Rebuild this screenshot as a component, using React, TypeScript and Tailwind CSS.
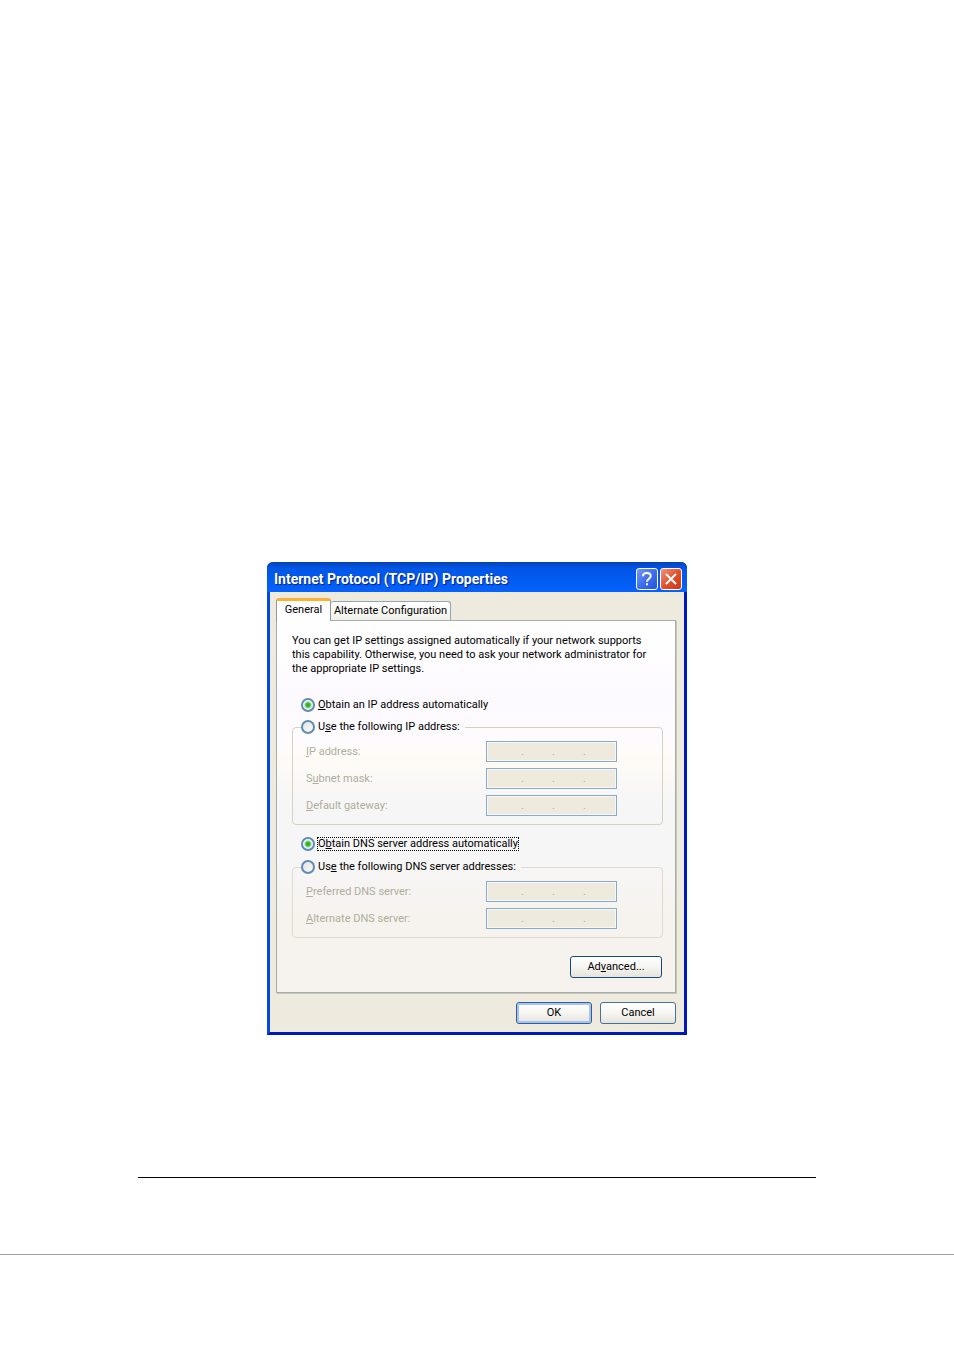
import { useState } from "react";
import type { ReactNode } from "react";

type Mode = "auto" | "manual";

function RadioOption({
  id,
  name,
  checked,
  onSelect,
  focused = false,
  children,
}: {
  id: string;
  name: string;
  checked: boolean;
  onSelect: () => void;
  focused?: boolean;
  children: ReactNode;
}) {
  return (
    <div className="flex h-4 items-center">
      <input
        type="radio"
        id={id}
        name={name}
        checked={checked}
        onChange={onSelect}
        className="h-[14px] w-[14px] shrink-0 appearance-none rounded-full border-2 border-[#5f8cb4] bg-linear-to-br from-[#dedfdb] to-white bg-origin-border checked:bg-[radial-gradient(circle,#22a822_0px,#3cbc3c_2px,#eef3ec_4px,#ffffff_5px)]"
      />
      <label
        htmlFor={id}
        className={
          focused
            ? "ml-0.5 border border-dotted border-black leading-3 whitespace-nowrap"
            : "ml-0.5 border border-transparent leading-3 whitespace-nowrap"
        }
      >
        {children}
      </label>
    </div>
  );
}

function AddressRow({
  id,
  label,
  disabled,
  children,
}: {
  id: string;
  label: string;
  disabled: boolean;
  children: ReactNode;
}) {
  return (
    <div className="flex h-[21px] items-center justify-between">
      <label htmlFor={id} className={disabled ? "text-[#b0ad9d]" : "text-black"}>
        {children}
      </label>
      <div
        className={
          disabled
            ? "flex h-[21px] w-[131px] items-center border border-[#88abcd] bg-[#eeeade] px-1.5 text-[#b0ad9d] inset-ring inset-ring-[#f8f7f2]"
            : "flex h-[21px] w-[131px] items-center border border-[#7f9db9] bg-white px-1.5 text-black"
        }
      >
        {[1, 2, 3, 4].map((part) => (
          <div key={part} className="flex">
            <input
              id={part === 1 ? id : undefined}
              type="text"
              maxLength={3}
              disabled={disabled}
              aria-label={`${label} part ${part}`}
              className="w-7 bg-transparent text-center outline-none"
            />
            {part < 4 && <span className="w-[3px]">.</span>}
          </div>
        ))}
      </div>
    </div>
  );
}

const buttonClass =
  "h-[22px] rounded-[3px] border bg-linear-to-b from-white via-[#f6f5f1] to-[#e6e3da]";

export default function App() {
  const [ipMode, setIpMode] = useState<Mode>("auto");
  const [dnsMode, setDnsMode] = useState<Mode>("auto");

  return (
    <main className="bg-white pt-[562px] pb-24 font-[Roboto,sans-serif] text-[11px] leading-[14px] text-black">
      <section
        aria-labelledby="dialog-title"
        className="mx-auto max-w-[420px] rounded-t-md border-x-[3px] border-b-[3px] border-r-[#0019bd] border-b-[#0019bd] border-l-[#0549e3] bg-[#eeeade]"
      >
        <header className="-mx-[3px] flex h-[30px] items-center rounded-t-md bg-linear-to-b from-[#0842b4] via-[#0055e5] via-20% to-[#0562fb] pt-1 pr-[5px] pl-[7px]">
          <h1
            id="dialog-title"
            className="flex-1 text-[14px] font-bold text-white text-shadow-[1px_1px_1px_#0a1f80]"
          >
            Internet Protocol (TCP/IP) Properties
          </h1>
          <div className="flex gap-0.5">
            <button
              type="button"
              aria-label="Help"
              className="flex h-[22px] w-[22px] items-center justify-center rounded-[3px] border border-white bg-linear-to-br from-[#7498f5] via-[#3f6fee] to-[#2353dc]"
            >
              <svg width="14" height="16" viewBox="0 0 14 16" fill="none" stroke="#fff" strokeWidth="2">
                <path d="M3 5.2C3 2.9 4.6 2 6.8 2c2.3 0 3.9 1 3.9 3.1 0 2.6-3.7 2.6-3.7 5.6M7 12.3v2" />
              </svg>
            </button>
            <button
              type="button"
              aria-label="Close"
              className="flex h-[22px] w-[22px] items-center justify-center rounded-[3px] border border-white bg-linear-to-br from-[#ee9479] via-[#e2512c] to-[#c93a10]"
            >
              <svg width="14" height="14" viewBox="0 0 14 14" stroke="#fff" strokeWidth="2">
                <path d="M2 2l10 10M12 2L2 12" />
              </svg>
            </button>
          </div>
        </header>

        <div className="pt-1.5 pr-2 pb-2 pl-1.5">
          <div role="tablist" className="flex items-end">
            <button
              type="button"
              role="tab"
              aria-selected="true"
              className="relative z-10 -mb-px h-[23px] w-[55px] rounded-t-[3px] border-x border-t-[3px] border-x-[#919b9c] border-t-[#fbb030] bg-white pb-0.5"
            >
              General
            </button>
            <button
              type="button"
              role="tab"
              aria-selected="false"
              className="h-[19px] w-[120px] rounded-t-[3px] border border-b-0 border-l-0 border-[#91a7b4] bg-linear-to-b from-white to-[#f0f0ea] whitespace-nowrap"
            >
              Alternate Configuration
            </button>
          </div>

          <div
            role="tabpanel"
            className="border border-[#a5acae] bg-[linear-gradient(#ffffff_0%,#fdfaff_20%,#fefbff_32%,#fefbf6_37%,#f6f6f7_50%,#f6f6f6_65%,#f6f3ee_80%)] px-[15px] pt-[13px] pb-[14px] shadow-[1px_1px_0_#c9c7ba]"
          >
            <p>
              You can get IP settings assigned automatically if your network supports
              <br />
              this capability. Otherwise, you need to ask your network administrator for
              <br />
              the appropriate IP settings.
            </p>

            <div className="mt-[21px] pl-[9px]">
              <RadioOption
                id="ip-auto"
                name="ip-mode"
                checked={ipMode === "auto"}
                onSelect={() => setIpMode("auto")}
              >
                <u>O</u>btain an IP address automatically
              </RadioOption>
            </div>
            <fieldset className="mr-[-3px] mt-1.5 rounded-[4px] border border-[#d5d3bf] pr-[45px] pb-2 pl-2">
              <legend className="pr-1">
                <RadioOption
                  id="ip-manual"
                  name="ip-mode"
                  checked={ipMode === "manual"}
                  onSelect={() => setIpMode("manual")}
                >
                  U<u>s</u>e the following IP address:
                </RadioOption>
              </legend>
              <div className="mt-1.5 space-y-1.5 pl-[5px]">
                <AddressRow id="ip-address" label="IP address" disabled={ipMode === "auto"}>
                  <u>I</u>P address:
                </AddressRow>
                <AddressRow id="subnet-mask" label="Subnet mask" disabled={ipMode === "auto"}>
                  S<u>u</u>bnet mask:
                </AddressRow>
                <AddressRow id="gateway" label="Default gateway" disabled={ipMode === "auto"}>
                  <u>D</u>efault gateway:
                </AddressRow>
              </div>
            </fieldset>

            <div className="mt-[11px] pl-[9px]">
              <RadioOption
                id="dns-auto"
                name="dns-mode"
                checked={dnsMode === "auto"}
                onSelect={() => setDnsMode("auto")}
                focused
              >
                O<u>b</u>tain DNS server address automatically
              </RadioOption>
            </div>
            <fieldset className="mr-[-3px] mt-[7px] rounded-[4px] border border-[#dddbcb] pr-[45px] pb-2 pl-2">
              <legend className="pr-1">
                <RadioOption
                  id="dns-manual"
                  name="dns-mode"
                  checked={dnsMode === "manual"}
                  onSelect={() => setDnsMode("manual")}
                >
                  Us<u>e</u> the following DNS server addresses:
                </RadioOption>
              </legend>
              <div className="mt-1.5 space-y-1.5 pl-[5px]">
                <AddressRow id="preferred-dns" label="Preferred DNS server" disabled={dnsMode === "auto"}>
                  <u>P</u>referred DNS server:
                </AddressRow>
                <AddressRow id="alternate-dns" label="Alternate DNS server" disabled={dnsMode === "auto"}>
                  <u>A</u>lternate DNS server:
                </AddressRow>
              </div>
            </fieldset>

            <div className="mt-[18px] -mr-0.5 flex justify-end">
              <button type="button" className={`${buttonClass} w-[92px] border-[#174a7c]`}>
                Ad<u>v</u>anced...
              </button>
            </div>
          </div>

          <div className="mt-[9px] flex justify-end gap-2">
            <button
              type="button"
              className={`${buttonClass} w-[76px] border-[#2f5f9c] inset-ring-2 inset-ring-[#a9c3f0]`}
            >
              OK
            </button>
            <button type="button" className={`${buttonClass} w-[76px] border-[#44709c]`}>
              Cancel
            </button>
          </div>
        </div>
      </section>

      <hr className="mx-[138px] mt-[142px] border-black" />
      <hr className="mt-[76px] border-[#a0a0a0]" />
    </main>
  );
}
